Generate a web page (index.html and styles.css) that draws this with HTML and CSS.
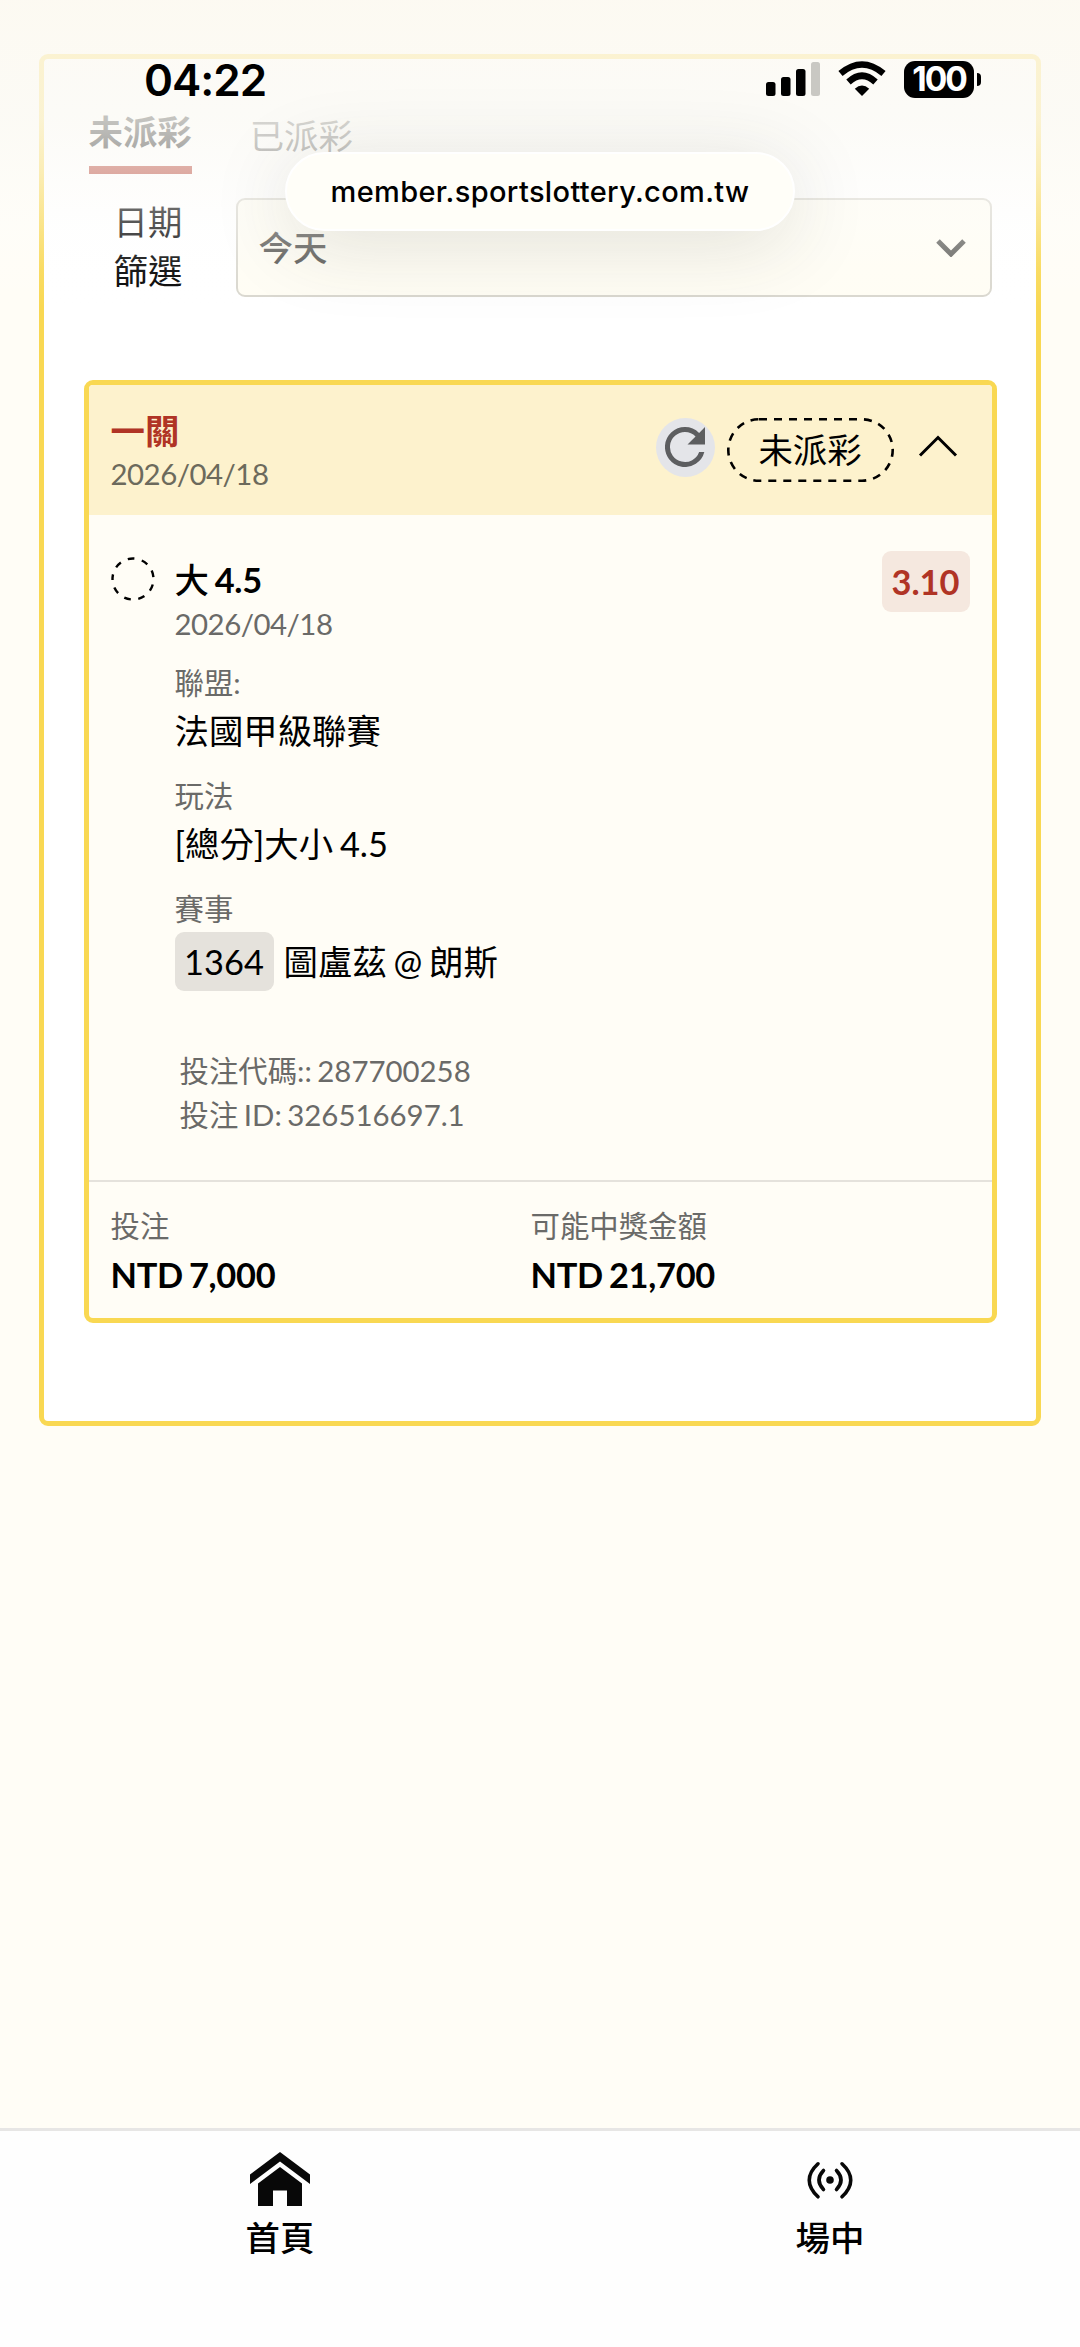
FILE: index.html
```html
<!DOCTYPE html>
<html lang="zh-Hant">
<head>
  <meta charset="UTF-8">
  <meta name="viewport" content="width=device-width, initial-scale=1.0">
  <title>投注紀錄</title>
  <link rel="stylesheet" href="styles.css">
</head>
<body>
  <main class="panel">
    <div class="tabs">
      <a class="tab active">未派彩</a>
      <a class="tab">已派彩</a>
    </div>

    <div class="filter">
      <label class="filter-label">日期<br>篩選</label>
      <div class="select">
        <span>今天</span>
        <svg width="30" height="18" viewBox="0 0 30 18"><path d="M2 2l13 13 13-13" fill="none" stroke="#111" stroke-width="5"/></svg>
      </div>
    </div>

    <section class="ticket">
      <header class="ticket-header">
        <div>
          <h2 class="ticket-title">一關</h2>
          <p class="date">2026/04/18</p>
        </div>
        <div class="ticket-actions">
          <span class="refresh">
            <svg width="40" height="40" viewBox="4 4 16 16"><path fill="#5d5e60" d="M17.65 6.35A7.96 7.96 0 0 0 12 4a8 8 0 1 0 7.73 10h-2.08A6 6 0 1 1 12 6c1.66 0 3.14.69 4.22 1.78L13 11h7V4z"/></svg>
          </span>
          <span class="badge">
            <svg class="badge-outline" width="167" height="64" viewBox="0 0 167 64"><rect x="1.3" y="1.3" width="164.4" height="61.4" rx="30.7" fill="none" stroke="#000" stroke-width="2.6" stroke-dasharray="8 7"/></svg>
            未派彩
          </span>
          <svg class="collapse" width="40" height="24" viewBox="0 0 40 24"><path d="M2 21.5l18-18 18 18" fill="none" stroke="#000" stroke-width="3"/></svg>
        </div>
      </header>

      <div class="bet">
        <svg class="bet-status" width="44" height="44" viewBox="0 0 44 44"><circle cx="22" cy="22" r="20.5" fill="none" stroke="#000" stroke-width="2.4" stroke-dasharray="6.7 7.61" stroke-dashoffset="3" transform="rotate(183 22 22)"/></svg>
        <div class="bet-info">
          <h3 class="bet-title"><span>大</span> 4.5</h3>
          <p class="date">2026/04/18</p>
          <dl class="details">
            <dt>聯盟:</dt>
            <dd>法國甲級聯賽</dd>
            <dt>玩法</dt>
            <dd>[總分]大小 4.5</dd>
            <dt>賽事</dt>
            <dd class="match"><span class="match-no">1364</span>圖盧茲 @ 朗斯</dd>
          </dl>
          <div class="codes">
            <p>投注代碼:: 287700258</p>
            <p>投注 ID: 326516697.1</p>
          </div>
        </div>
        <span class="odds">3.10</span>
      </div>

      <footer class="ticket-footer">
        <div>
          <p class="label">投注</p>
          <p class="amount">NTD 7,000</p>
        </div>
        <div>
          <p class="label">可能中獎金額</p>
          <p class="amount">NTD 21,700</p>
        </div>
      </footer>
    </section>
  </main>

  <nav class="bottom-nav">
    <a class="nav-item">
      <svg width="60" height="54" viewBox="0 0 60 54" fill="#080808"><path d="M30 0l30 22.5v9.5L30 9.5 0 32v-9.5z"/><path d="M30 15l22 16.5V54H37V38.5H23V54H8V31.5z"/></svg>
      <span>首頁</span>
    </a>
    <a class="nav-item">
      <svg width="46" height="54" viewBox="0 0 46 54" fill="none" stroke="#080808" stroke-width="3.6" stroke-linecap="round"><circle cx="23" cy="28" r="3.8" fill="#080808" stroke="none"/><path d="M16.5 18.5q-9 9.5 0 19M29.5 18.5q9 9.5 0 19M11 11.8q-17.5 16.2 0 33M35 11.8q17.5 16.2 0 33"/></svg>
      <span>場中</span>
    </a>
  </nav>

  <div class="top-fade"></div>

  <div class="status-bar">
    <span class="clock">04:22</span>
    <div class="status-icons">
      <svg width="54" height="36" viewBox="0 0 54 36"><rect y="21" width="9.5" height="14" rx="2.5"/><rect x="15" y="16" width="9.5" height="19" rx="2.5"/><rect x="30" y="8" width="9.5" height="27" rx="2.5"/><rect x="45" y="1" width="9" height="34" rx="2.5" fill="#c9c8c3"/></svg>
      <svg width="48" height="36" viewBox="0 0 48 36"><path d="M24 35l-7.2-7.2q7.2-6.8 14.4 0z"/><path d="M10.5 21q13.5-12.5 27 0M2.5 12.5q21.5-18 43 0" fill="none" stroke="#000" stroke-width="6.5"/></svg>
      <div class="battery"><span>100</span></div>
    </div>
  </div>
  <div class="url-pill">member.sportslottery.com.tw</div>
</body>
</html>
```
FILE: styles.css
```css
* {
  box-sizing: border-box;
}

body {
  margin: 0;
  height: 2347px;
  display: flex;
  flex-direction: column;
  position: relative;
  overflow: hidden;
  background-color: #fffdf6;
  color: #000;
  font-family: Lato, "Noto Sans CJK TC", sans-serif;
  font-size: 34.4px;
  word-spacing: -2px;
}

h2, h3, p, dl, dd {
  margin: 0;
}

svg {
  display: block;
  flex: none;
}

.panel {
  margin: 53.5px 39px 0;
  height: 1372px;
  padding: 48px 39.5px 0;
  border: 5px solid #f9d852;
  border-radius: 9px;
  background-color: #fff;
}

.tabs {
  display: flex;
  gap: 58px;
  height: 67px;
  padding-left: 5px;
}

.tab {
  height: 67px;
  padding-top: 7px;
  line-height: 44px;
  color: #555;
}

.tab.active {
  padding-top: 3px;
  border-bottom: 8px solid #b03425;
  color: #000;
  font-weight: 700;
}

.filter {
  display: flex;
  margin-top: 24px;
  padding: 0 5px 0 30px;
}

.filter-label {
  width: 122px;
  margin-top: -1px;
  line-height: 49px;
}

.select {
  flex: 1;
  height: 99px;
  display: flex;
  align-items: center;
  justify-content: space-between;
  padding: 0 24px 2px 21px;
  border: 2px solid #d9d7ce;
  border-radius: 9px;
  background-color: #fffdf4;
  font-weight: 500;
}

.select span {
  opacity: 0.65;
}

.select svg {
  margin-top: 4px;
  opacity: 0.65;
}

.ticket {
  margin-top: 83px;
  border: 5px solid #f9d852;
  border-radius: 9px;
  background-color: #fffdf6;
  overflow: hidden;
}

.ticket-header {
  height: 130px;
  display: flex;
  justify-content: space-between;
  padding: 25px 34px 0 22px;
  background-color: #fdf2cd;
}

.ticket-title {
  font-size: 34.4px;
  line-height: 42px;
  font-weight: 700;
  color: #b03425;
}

.date {
  font-size: 29.4px;
  line-height: 43px;
  letter-spacing: -0.5px;
  color: #6a6a68;
}

.ticket-header .date {
  color: #6c6a5c;
}

.ticket-actions {
  display: flex;
  padding-top: 8px;
}

.refresh {
  width: 59px;
  height: 59px;
  margin-right: 12px;
  display: flex;
  align-items: center;
  justify-content: center;
  border-radius: 50%;
  background-color: #e4e5e9;
}

.badge {
  position: relative;
  width: 167px;
  height: 64px;
  line-height: 63px;
  text-align: center;
}

.badge-outline {
  position: absolute;
  top: 0;
  left: 0;
}

.collapse {
  margin: 16px 0 0 24px;
}

.bet {
  display: flex;
  height: 667.5px;
  padding: 36px 22px 0;
  border-bottom: 2.5px solid #e5e2dc;
}

.bet-status {
  margin-top: 6px;
}

.bet-info {
  flex: 1;
  padding: 7px 0 0 20px;
}

.bet-title {
  font-size: 34.4px;
  line-height: 44px;
  font-weight: 700;
  letter-spacing: -0.3px;
}

.bet-title span {
  font-weight: 500;
}

.bet-info .date {
  line-height: 44px;
}

.details {
  padding-top: 15px;
}

.details dt {
  font-size: 29.4px;
  line-height: 44px;
  color: #6a6a68;
}

.details dd {
  height: 51px;
  line-height: 51px;
  margin-bottom: 18px;
}

.details .match {
  display: flex;
  height: 59px;
  line-height: 59px;
  margin: 1px 0 0;
}

.match-no {
  width: 99px;
  margin-right: 10px;
  border-radius: 9px;
  background-color: #e5e2dc;
  text-align: center;
}

.codes {
  padding: 58px 0 0 5px;
  font-size: 29.4px;
  line-height: 44px;
  color: #6a6a68;
}

.odds {
  width: 88px;
  height: 61px;
  line-height: 62px;
  border-radius: 9px;
  background-color: #f5e8df;
  color: #b03425;
  font-weight: 700;
  text-align: center;
}

.ticket-footer {
  display: grid;
  grid-template-columns: 420px 1fr;
  height: 136px;
  padding: 20px 22px 0;
}

.label {
  font-size: 29.4px;
  line-height: 48px;
  color: #6a6a68;
}

.amount {
  line-height: 49px;
  font-weight: 700;
  letter-spacing: -0.3px;
}

.bottom-nav {
  margin-top: auto;
  height: 219px;
  display: grid;
  grid-template-columns: 560px 540px;
  border-top: 3px solid #e7e6e5;
  background-color: #fefefe;
}

.nav-item {
  display: flex;
  flex-direction: column;
  align-items: center;
  padding-top: 21px;
  line-height: 44px;
  font-weight: 500;
}

.nav-item span {
  margin-top: 10px;
}

/* Browser chrome over the scrolled page */
.top-fade {
  position: absolute;
  top: 0;
  left: 0;
  right: 0;
  height: 310px;
  background: linear-gradient(rgba(252, 249, 241, 0.8) 0, rgba(251, 250, 245, 0.78) 120px, rgba(252, 251, 247, 0.6) 172px, rgba(253, 253, 252, 0.33) 225px, rgba(254, 254, 254, 0.1) 270px, rgba(255, 255, 255, 0) 310px);
}

.status-bar {
  position: absolute;
  top: 60px;
  left: 144px;
  right: 99px;
  height: 38px;
  display: flex;
  justify-content: space-between;
  font-family: Inter, sans-serif;
}

.clock {
  font-size: 44px;
  line-height: 40px;
  font-weight: 600;
  letter-spacing: -1px;
}

.status-icons {
  display: flex;
  gap: 18px;
  padding-top: 1px;
}

.battery {
  position: relative;
  width: 70px;
  height: 37px;
  margin-right: 7px;
  border-radius: 11px;
  background-color: #000;
  color: #fff;
  font-size: 33.5px;
  line-height: 37px;
  font-weight: 700;
  letter-spacing: -2px;
  text-align: center;
}

.battery::after {
  content: "";
  position: absolute;
  top: 12px;
  right: -7px;
  width: 4px;
  height: 13px;
  border-radius: 0 5px 5px 0;
  background-color: #000;
}

.url-pill {
  position: absolute;
  top: 152px;
  left: 285px;
  width: 510px;
  height: 79px;
  border: 2px solid #fff;
  border-radius: 40px;
  background-color: #fffef8;
  box-shadow: 0 12px 80px rgba(60, 60, 40, 0.15);
  font-family: Inter, sans-serif;
  font-size: 29px;
  line-height: 76px;
  font-weight: 500;
  letter-spacing: 0.35px;
  text-align: center;
}
```
